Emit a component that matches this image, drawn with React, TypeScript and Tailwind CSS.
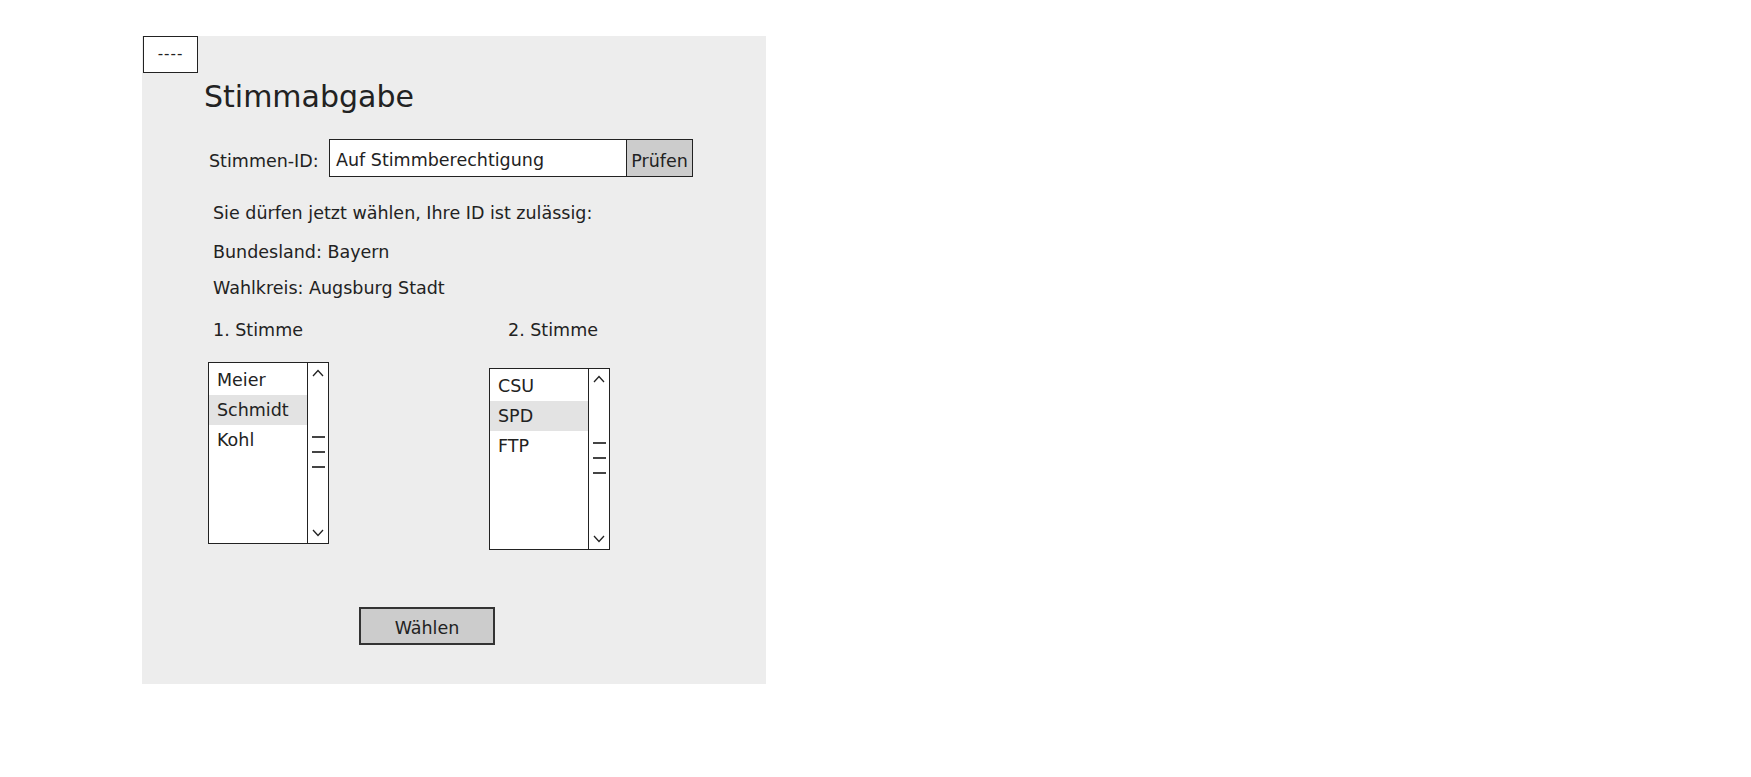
import React from "react"

const font = { fontFamily: '"Comic Sans MS", "DejaVu Sans", sans-serif' }

function Chevron({ up }: { up?: boolean }) {
  return (
    <svg width="12" height="8" viewBox="0 0 12 8" className="shrink-0">
      <path
        d={up ? "M1 7 L6 1.5 L11 7" : "M1 1 L6 6.5 L11 1"}
        fill="none"
        stroke="#222"
        strokeWidth="1.3"
      />
    </svg>
  )
}

function ListBox({ items, selected, className }: { items: string[]; selected: number; className?: string }) {
  return (
    <div className={"flex w-[121px] h-[182px] border border-[#222] bg-white " + (className ?? "")}>
      <div className="flex-1 flex flex-col pt-[2px]">
        {items.map((item, i) => (
          <div
            key={item}
            className={"h-[30px] leading-[30px] pl-[8px] text-[17.5px] text-[#222] " + (i === selected ? "bg-[#e3e3e3]" : "")}
          >
            {item}
          </div>
        ))}
      </div>
      <div className="w-[21px] border-l border-[#222] flex flex-col items-center">
        <div className="mt-[6px]">
          <Chevron up />
        </div>
        <div className="mt-[59px] flex flex-col gap-[13px] items-center">
          <div className="w-[13px] h-[2px] bg-[#444]" />
          <div className="w-[13px] h-[2px] bg-[#444]" />
          <div className="w-[13px] h-[2px] bg-[#444]" />
        </div>
        <div className="flex-1" />
        <div className="mb-[6px]">
          <Chevron />
        </div>
      </div>
    </div>
  )
}

export default function App() {
  return (
    <div className="w-[1751px] h-[777px] bg-white pt-[36px] pl-[142px]" style={font}>
      <div className="w-[624px] h-[648px] bg-[#ededed] flex flex-col text-[#222]">
        <div className="ml-[1px] w-[55px] h-[37px] border border-[#222] bg-white flex items-center justify-center text-[15px] tracking-[1px] leading-none">
          ----
        </div>

        <h1 className="ml-[62px] mt-[6px] h-[36px] leading-[36px] text-[30px]">Stimmabgabe</h1>

        <div className="mt-[24px] flex items-center h-[38px] ml-[67px]">
          <span className="w-[120px] text-[17.5px] pt-[6px]">Stimmen-ID:</span>
          <div className="w-[298px] h-[38px] border border-[#222] bg-white flex items-center pl-[6px] pt-[4px] text-[17.5px]">
            Auf Stimmberechtigung
          </div>
          <div className="w-[66px] h-[38px] border border-l-0 border-[#222] bg-[#cccccc] flex items-center justify-center pt-[6px] text-[17.5px]">
            Prüfen
          </div>
        </div>

        <p className="mt-[24px] ml-[71px] h-[24px] leading-[24px] text-[17.5px]">
          Sie dürfen jetzt wählen, Ihre ID ist zulässig:
        </p>
        <p className="mt-[15px] ml-[71px] h-[24px] leading-[24px] text-[17.5px]">Bundesland: Bayern</p>
        <p className="mt-[12px] ml-[71px] h-[24px] leading-[24px] text-[17.5px]">Wahlkreis: Augsburg Stadt</p>

        <div className="mt-[18px] ml-[71px] flex h-[24px] leading-[24px] text-[17.5px]">
          <span className="w-[295px]">1. Stimme</span>
          <span>2. Stimme</span>
        </div>

        <div className="mt-[20px] ml-[66px] flex items-start gap-[160px]">
          <ListBox items={["Meier", "Schmidt", "Kohl"]} selected={1} />
          <ListBox items={["CSU", "SPD", "FTP"]} selected={1} className="mt-[6px] w-[120px]" />
        </div>

        <button className="mt-[57px] ml-[217px] w-[136px] h-[38px] border-2 border-[#333] bg-[#cccccc] text-[17.5px] pt-[5px] flex items-center justify-center">
          Wählen
        </button>
      </div>
    </div>
  )
}
